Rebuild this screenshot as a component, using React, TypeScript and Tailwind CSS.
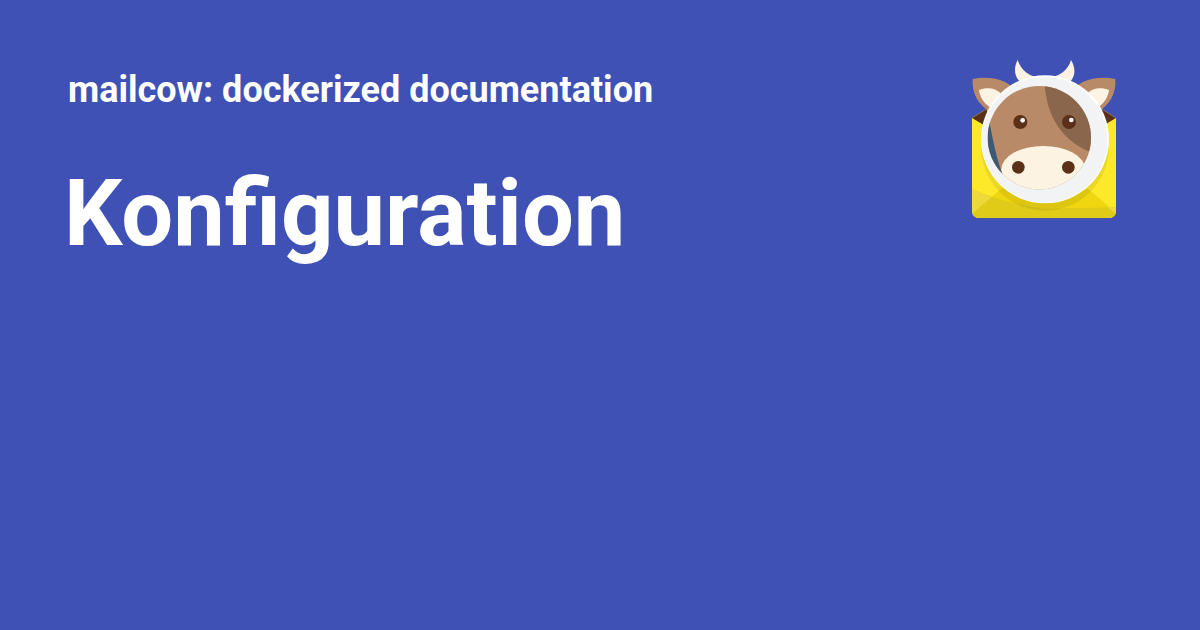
function MailcowLogo() {
  return (
    <svg width="170" height="175" viewBox="0 0 510 525" aria-hidden="true">
      <clipPath id="envelope">
        <path d="M36 204 L80 176 L424 176 L468 204 L468 480 Q468 505 443 505 L61 505 Q36 505 36 480 Z" />
      </clipPath>
      {/* envelope */}
      <g clipPath="url(#envelope)">
        <rect x="36" y="176" width="432" height="329" fill="#fde82a" />
        <path d="M36 204 L80 176 L90 236 Z M468 204 L424 176 L414 236 Z" fill="#5a3118" />
        <path d="M36 494 L128 412 L386 418 L468 488 L468 505 L36 505 Z" fill="#efd610" />
        <path d="M36 418 Q140 462 255 476 L468 472 L468 505 L36 505 Z" fill="#dfcb18" />
        <path d="M36 418 Q64 430 95 441 L36 492 Z" fill="#ecd93a" />
        <path d="M468 472 L442 472 L468 492 Z" fill="#ecd93a" />
      </g>
      <circle cx="255" cy="290" r="192" fill="#000" opacity="0.07" />
      {/* horns */}
      <path d="M173 30 C158 58 164 86 190 104 L320 104 C346 86 350 58 333 30 C325 58 300 84 252 84 C206 84 182 58 173 30 Z" fill="#fdf3e3" />
      {/* ears */}
      <path d="M38 87 C80 78 130 85 155 110 L90 185 C55 165 35 130 38 87 Z" fill="#b98a67" />
      <path d="M466 87 C424 78 374 85 349 110 L414 185 C449 165 469 130 466 87 Z" fill="#b98a67" />
      <path d="M57 120 C80 110 108 114 122 130 L90 172 C72 160 60 142 57 120 Z" fill="#fdf3e3" />
      <path d="M447 120 C424 110 396 114 382 130 L414 172 C432 160 444 142 447 120 Z" fill="#fdf3e3" />
      {/* head */}
      <circle cx="255" cy="268" r="192" fill="#fff" />
      <circle cx="254" cy="270" r="188" fill="#f1f3f4" />
      <clipPath id="face">
        <circle cx="238" cy="263" r="155" />
      </clipPath>
      <g clipPath="url(#face)">
        <rect x="80" y="100" width="320" height="330" fill="#b98a67" />
        <path d="M254 100 C258 190 300 270 394 308 L400 100 Z" fill="#8a674c" />
        <path d="M85 200 C99 270 110 330 130 378 L80 378 Z" fill="#3e5a73" />
        <ellipse cx="250" cy="358" rx="126" ry="70" fill="#fdf3e3" />
      </g>
      {/* eyes */}
      <circle cx="181" cy="216" r="21" fill="#5a3118" />
      <circle cx="188" cy="211" r="7" fill="#fff" />
      <circle cx="327" cy="216" r="21" fill="#5a3118" />
      <circle cx="334" cy="210" r="7" fill="#fff" />
      {/* nostrils */}
      <circle cx="175" cy="352" r="19" fill="#5a3118" />
      <circle cx="325" cy="352" r="19" fill="#5a3118" />
    </svg>
  );
}

export default function App() {
  return (
    <div className="flex h-[630px] w-[1200px] items-start justify-between bg-[#3f51b5] pl-[64px] pr-[70px] pt-[50px] font-['Roboto',sans-serif] text-white antialiased">
      <div>
        <p className="pl-[4px] pt-[18px] text-[36px] font-bold leading-[44px]">mailcow: dockerized documentation</p>
        <h1 className="mt-[47px] text-[92px] font-bold leading-[110px]">Konfiguration</h1>
      </div>
      <MailcowLogo />
    </div>
  );
}
